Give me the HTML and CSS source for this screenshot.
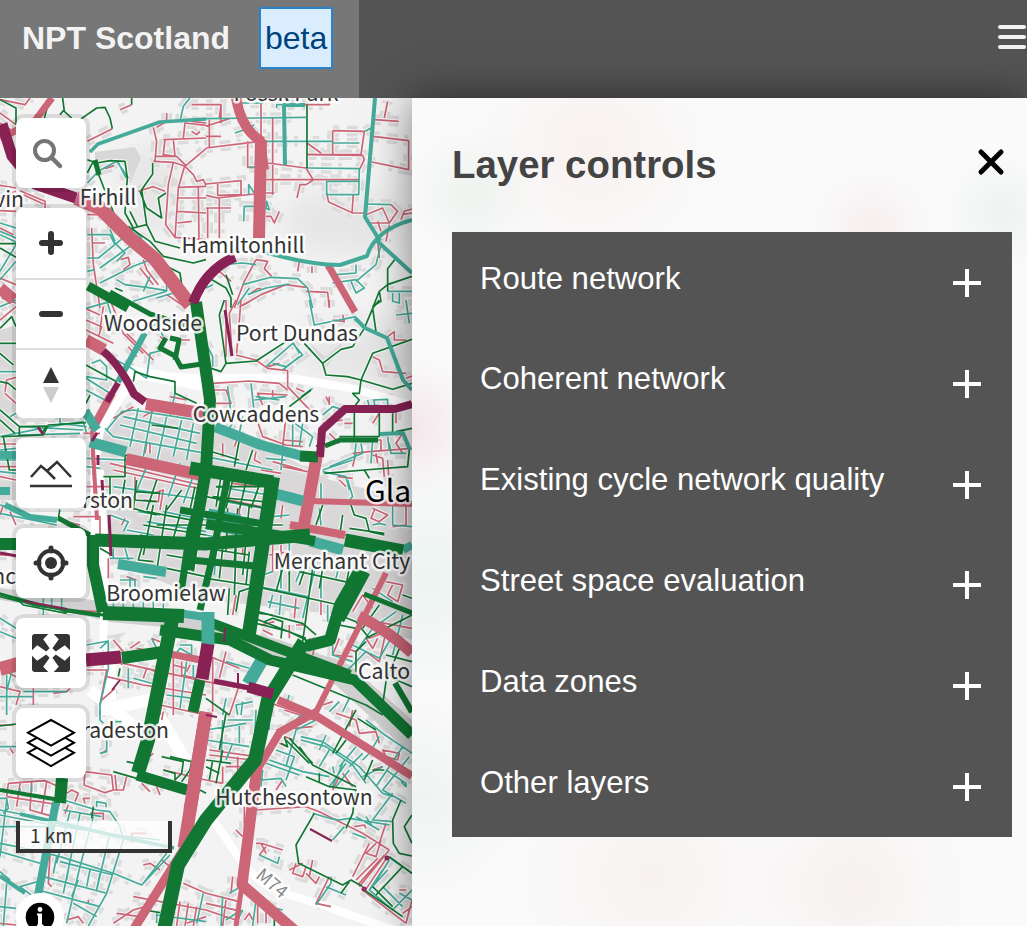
FILE: index.html
```html
<!DOCTYPE html>
<html lang="en">
<head>
<meta charset="utf-8">
<title>NPT Scotland</title>
<link rel="stylesheet" href="styles.css">
</head>
<body>
<header class="header">
  <div class="brand"><strong>NPT Scotland</strong><span class="beta">beta</span></div>
  <svg class="menu" width="28" height="26" viewBox="0 0 28 26"><path d="M1 3H25M1 13H25M1 23H25"/></svg>
</header>
<main class="main">
<section class="map">
<svg class="canvas" width="412" height="828" viewBox="0 98 412 828">
<defs>
<g id="streets">
  <g transform="translate(0 98) scale(.3333)">
    <path class="p" d="M0 5L75 20L90 0M360 35L395 20M262 130L337 92M0 45L48 80M0 75L48 105M460 88L470 130L465 190M460 190L520 193L555 205L618 152M490 125L618 120M495 125L490 170L525 175L520 125M465 175L530 175L555 200L535 270L525 420M520 193L505 260L497 380L525 418L618 425M535 268L618 265M532 300H618M532 340L618 345M532 375L575 370M555 205L580 230L590 250L610 245L618 262M415 280L460 266L495 280M315 212L342 203M595 265L597 420M550 120L555 75L618 82M500 45V70L470 88M575 20H618M575 100L590 110L600 100M0 262L48 270M0 300L48 280M70 290L130 318M60 278L135 310V330M0 338L48 340M262 350H330M275 390L280 500L300 630M275 435H315M430 485L440 515L475 560M420 510L460 560M362 485L385 478L390 500L370 515M300 345L350 400M0 540L48 560M0 390L40 410M5 600L48 615M500 590L560 630M575 70L618 75"/>
    <path class="t" d="M540 70L550 25L570 0M262 255L295 220L350 190L385 240M352 188L378 240M0 375L48 390M0 400L48 420M0 410L48 432M0 520L48 440M0 545L48 490M262 480H295L400 395L425 420L300 510M340 430L375 465L350 490M262 520L285 515M300 555L400 505L440 490L470 470M350 545L375 560L440 568L500 578V545M262 410H330L345 440M395 415L440 470M430 580L450 535M400 610L500 580M470 600L520 585M330 395L345 430"/>
    <path class="g" d="M0 5L48 30V80M150 0L133 60M188 0L193 40L215 60M193 35L180 50M240 65L290 30L315 28L330 60L337 92M395 0V20M262 185L290 195L330 188L375 190L382 240L375 345L400 390L440 380L425 275L458 228V195M262 225L280 190L300 240L345 355M440 380L465 430L540 450M440 330L485 360L475 300L498 285M440 330L420 280M385 385L450 430L490 475L580 495L618 485M345 570L368 580M390 340L412 385M0 437H48M0 450L48 478M500 505L540 525L545 560"/>
  </g>
  <g transform="translate(206 98) scale(.3333)">
    <path class="p" d="M0 20H45L40 60M45 20V75M0 85L70 62M10 65V150M0 150L165 130M165 0V140M0 115H45M245 20H370V5M380 98L475 100L465 170H305M380 98V170M303 135L345 165M303 170L470 172L475 185L462 212M505 65L578 70M535 60L545 10M500 115L608 128V215L498 192M125 130V208H145M185 195L300 210L322 246L300 260H282L273 300M180 245H460M200 60V290M180 285H205M0 258L105 248V290L35 292V255M0 292L35 300L145 288M0 330H75M40 300V420M5 330V420M180 355H195L205 375L220 340M362 285L368 312L440 345H475M442 290L438 345M480 350L530 330L550 375L490 375M550 375L575 340L555 320M585 365L595 340L618 333M588 350L618 345M550 380L540 430M515 370L525 400M150 485L115 550L85 630M150 485L185 490L175 512L197 535M280 490L275 520M135 585L155 572H165M300 580L365 583L370 630M110 622L165 590L240 560L300 568M318 505V525M515 430L520 480M0 560L40 520L75 550"/>
    <path class="t" d="M0 62L300 58M90 15H170V0M87 105L130 90L145 80M170 130H380M380 135H460M302 210L460 212L458 290H362V250H460M478 100L495 90M482 318L555 320M180 330L182 310L190 335L175 330M113 370L115 325H145M130 208H165M128 290V260L145 285M50 500L110 495L150 500M110 560L195 538L275 542L305 570L320 630M130 570L95 620M125 590L180 570L250 558M380 555L450 545L475 570L450 585L435 550M450 500V525L390 530M525 440L510 500L450 550M545 580H618M560 585V610L580 615V585M0 570L20 560M212 30V20H230"/>
    <path class="g" d="M303 20V210M570 480L545 512V580M618 535L545 560L520 580L500 630M0 535L60 570L75 600V630M545 560L555 555M60 530L80 590M520 580L525 610L500 625"/>
  </g>
  <g transform="translate(0 300) scale(.3333)">
    <path class="p" d="M255 25L300 45M258 60L305 80L295 110M258 90L340 130M330 0L355 60L370 100L430 160M310 20L300 90M380 100L460 180M385 140L410 170M540 120H570M480 110L500 125M15 275L20 240L48 232M15 280L48 310M0 60L48 20M340 510L618 570M330 490L600 555M400 320L340 355M450 430V460M440 430L435 460M405 530V600M480 570L475 605L430 600M250 400H300M275 450L285 600M0 432H48M0 500H48M0 530L48 540M510 290L560 300M260 560H330M430 350L480 320M460 580L490 570L480 630"/>
    <path class="t" d="M320 0L350 100M0 20L48 0M258 235L330 280M258 270L325 305M258 230L320 240V200L300 180L275 190M330 170L395 205L440 235M440 235L450 160L490 150M320 390L365 335L400 330L618 365M315 385L340 410L618 460M370 350L600 400M360 375L590 430M415 325L390 440M455 340L430 470M500 350L470 490M545 360L520 470M580 370L560 480M525 280L510 350M0 410L150 380L250 365L260 400M60 380L250 390M180 340V370L260 380M60 405L240 400M0 450L48 445M0 480H48M0 515L48 520M260 475L375 480L600 530M0 215H48M30 350L48 340M258 25L330 5M260 500L300 505M340 560L618 600M390 620L440 500M505 590L540 490M550 610L590 500M600 530L590 630M440 90L470 70L490 110"/>
    <path class="g" d="M0 85L35 50L48 80M0 160L40 195M0 130H48M0 245L25 250L48 270M0 330L58 380V410M0 360L45 400M5 410L130 405L145 375L258 368M10 410L28 510H60M58 380L140 378L125 400M258 195L350 245M258 310L270 285M400 245L405 215L450 230L525 245V280L590 310M375 465L618 530M310 530H375V465M375 540L360 630M410 540L400 630M330 530V590M405 575L480 580M400 600L470 605M455 375L535 385M545 570L500 630M470 540L440 630M585 560L570 630"/>
  </g>
  <g transform="translate(206 300) scale(.3333)">
    <path class="p" d="M60 0V170M90 0L70 40L78 160M105 0L92 160M370 0V20M410 45L415 65L380 60M90 165L150 180L185 205L245 212V260L330 350M20 250L130 243L220 250L245 270M170 315L155 280L245 285M20 270H60L75 310H30M200 270V290M270 265L295 275M370 290V315M500 170L520 180L530 215L600 220M545 110L565 95V120H600M415 370H440M370 400L400 430M500 370L520 340M600 235L618 228M440 460L490 455L618 445M465 420H525V450M450 460L440 500M500 465L530 475L535 530M400 540L420 560M395 530L440 535M200 485L290 510M230 500L330 520M150 455L145 480L165 490M50 430V470M100 400L85 440M240 350L230 440M150 350L170 410L240 435L290 440M100 20L130 5M185 200L220 190M370 310L360 290M20 590L165 620M80 550L150 560M545 480L550 560M510 460L515 490M570 340V370M590 400L570 430L590 460M350 370L410 360M230 420L290 425M165 510L225 520"/>
    <path class="t" d="M310 0L325 75L450 50M570 45L618 40M600 0L610 70M0 130L20 170V200M65 260L75 340M135 250L145 340M145 300L240 290M180 200L260 130L290 165L240 200L200 190M230 210L280 170M260 125L280 160M285 290L320 265M350 345L380 320L430 335M240 350L320 410L310 440M500 300L545 298V320L505 315V298M370 500L470 460L465 430M350 510L440 480M345 550V600M425 540L440 590L430 600M350 515L420 530L430 570M550 430L555 460H600M230 460L225 510M180 475L240 480M0 470L200 510M30 560L220 590M30 600L200 630M80 370L60 400M110 350L100 400M260 370V440M290 370L280 440M485 300L490 320M450 430L445 480M500 420L495 490M545 410L550 450M150 290L220 300"/>
    <path class="g" d="M55 0L40 45L60 190L150 183L240 125M0 200L45 215L60 190M295 130L350 190L360 225L425 230L465 240L560 268L618 250M465 240L500 160L618 118M350 190L405 148L440 140L475 85L500 25L520 0M500 25L510 95M465 240L460 280H440L460 300L445 320V415M520 340V410M560 340V400M355 520L475 510L605 500L610 450M475 510L490 535M250 320L315 270M100 420L85 500M0 450L100 480M140 450L120 510M50 500L30 620M80 540L60 625M120 545L100 630M160 555L135 625M0 590L180 625M30 560H180M20 590L170 605M400 410H520M330 440L350 420M570 395L618 385"/>
  </g>
  <g transform="translate(0 505) scale(.3333)">
    <path class="p" d="M0 30L10 0M220 35H300V90M200 50L240 60M365 60L375 40M325 160V220M0 150H48M390 430L420 410M340 405L370 440L365 480M260 495H320L300 600M370 475L618 530M320 515L430 540L618 570M430 520L440 490L480 505M520 440V630M490 550L480 630M520 480L560 490M480 600L618 630M300 590L345 550M455 400L480 410M200 315L300 320M0 490L48 515M0 545L60 560L48 600M160 565L200 560L210 550M100 550V600M380 215L410 225M545 470V510L590 520M570 480L560 500M410 430L460 440M30 20L48 60"/>
    <path class="t" d="M0 0L48 10M0 25L170 60M330 30L385 50L370 80M340 160V130M385 165L375 130M330 160H400M360 225H405V260M0 340L48 370M0 380L48 400M0 575H100M20 510V630M35 500L20 560M540 420H575V450L540 430L525 450M560 470L540 610M500 570L580 580M455 400L470 430M455 535L400 520M260 420L325 408L300 430M325 410V490L300 600V630M130 330V280M155 280V310M185 280V310M70 560H200M385 490V550M580 480V520M380 75L460 90M440 50L618 80M490 20L618 45M340 280V310M370 285V310M400 285V310M430 285V310M460 285V310M490 285V310M430 215L470 220M390 215V260M415 180L490 190M415 20L480 30"/>
    <path class="g" d="M0 265L75 285L200 320L300 335M0 275L60 290L70 300L200 325M180 10L175 40M120 200V190M430 60L618 90M440 20L600 50M460 0L430 150M500 0L470 200M610 0L580 200M420 90L500 110M360 490L355 515M500 150L618 170M500 190L618 215M430 110L415 165L460 170M540 30L520 100M300 130L335 150M470 60H618M400 10L470 30"/>
  </g>
  <g transform="translate(206 505) scale(.3333)">
    <path class="p" d="M230 0L225 40M250 60L430 92M500 10L545 30L520 50L495 40L505 15M600 0V60L560 65M540 230L590 240L575 290L545 270L560 240M510 350L618 370M440 320L470 270L500 310M480 400L500 430L515 400M400 400L380 450L440 455M270 280L265 340M345 290V330M440 390L420 450M0 450L100 490M0 530L210 570M20 460V620M100 540L70 630M60 440L40 520M200 120V200M225 120V160M190 150L250 140M165 360L205 350M170 375L200 390M180 590L300 630M310 400L325 430L320 450M270 360H300M250 360V400M90 270L80 330M100 10V80M0 40L130 60M60 90L100 100M110 130V150M350 600L380 590M420 430L450 440M490 400L540 380L520 470L480 440"/>
    <path class="t" d="M340 10L345 60M400 180L390 220M560 0V60L618 65M500 60L520 55L540 60M570 320L500 370L450 440M500 250L560 290M160 245L305 275L290 340M185 290L280 310M200 200L170 210V240M225 160V250M290 180L270 230M330 180L310 260M250 100V210M345 220V280M365 300V350M440 420L520 460L555 400M380 420V450L440 470M60 470L130 490M250 570L240 600M410 620L430 580M370 620L400 590M60 580L50 630M110 590L105 630M140 590L90 600L95 630M0 90L150 120M0 70L120 95M225 270L220 330M250 30L200 35M155 280L165 250M420 500L480 440M590 330L560 450M0 20L130 40M30 130L25 210M200 270L190 310"/>
    <path class="g" d="M330 60L350 0M435 0L445 30L480 40L490 80L535 90M430 70L535 85M410 30L400 100M150 245L400 300M155 320L290 355L330 390M145 340L300 400M130 350L250 380L330 420M175 350L200 340L230 350L225 400M120 320L200 330M320 190L290 410M350 190L340 250M300 180L280 240M250 190V260M280 200L440 235M230 190L210 260M430 190L410 290M400 330L450 350L490 400M480 410L450 440V500M580 430L540 530L530 600M560 520L618 545M520 300L470 370M260 510L480 600L530 630M540 450L618 470M0 580L70 630M0 220L130 240M0 130L130 150M65 10L60 140M95 10L85 170M130 0L110 210M0 60H230M90 130L85 270M50 130L40 220M130 140L120 240M130 250L100 260L90 320M70 250L65 330M480 400L618 330M400 360L450 370M590 270L618 280"/>
  </g>
  <g transform="translate(0 710) scale(.3333)">
    <path class="p" d="M25 220L135 212L200 240M25 220L20 260M60 220L50 290M95 215L90 300L160 320M140 215L125 310M20 260L180 285M255 185L335 195L340 240L315 248L252 225ZM340 240L370 240L380 200M345 195L350 240M200 250L215 240L235 250L225 275M270 265L250 265L255 280M270 310H310V330M395 400V370H440M425 220L450 245M470 230L480 255M435 150L460 130M490 180L618 210M430 465L450 460L480 480M550 520L618 550M400 560L618 600M435 590L400 600L340 640M540 575L530 648M565 580L555 648M590 590L580 648M500 575L490 630M150 435L145 520L155 530M200 630L235 620L250 640M0 45H40M305 130L320 120M490 5L485 30M30 115L40 130M205 285L195 310M580 420L570 440M350 610L420 620M265 580V570M485 450L510 470M560 640L618 620M0 640L48 645"/>
    <path class="t" d="M0 265H20L25 295L10 310M0 315L155 345L320 370L515 410M0 300L150 330M190 270L290 300L330 305L360 350L370 390L320 550L265 648M290 290V275L318 280V292M0 400L100 420L180 440L340 490L425 525L510 435M430 520L500 430M0 350H150M20 270L0 440M280 320L240 470L200 640M240 310L190 550M210 305L170 460M330 370L290 540M190 300L305 320M0 485L30 510M115 540L300 590M130 500L320 550M180 455L340 495M170 440L160 490M210 450L200 510M270 480L260 530M300 490L290 540M235 510L215 560M220 580L290 620M0 590L48 595M20 520L10 648M320 90V125L300 130M300 0V30L310 40M0 110H48M0 425L120 460M350 375L480 390M470 610V640M470 615L618 635M610 550L590 640M100 560L60 530L130 510M60 235V250M95 225V245M345 35H365"/>
    <path class="g" d="M510 140L575 155L570 180L545 215M485 140L550 155L545 190L525 210V190L490 180M380 155L405 160M340 185L410 205M435 600L480 608M0 48L48 42M280 290L275 325M600 240L618 250"/>
  </g>
  <g transform="translate(206 710) scale(.3333)">
    <path class="p" d="M235 0L330 30M210 60L320 50M390 10L450 30L460 70L510 65L520 100M430 50L440 0M530 120L580 130L575 150L540 140ZM235 80L265 90M220 100L245 110M10 120L150 140M10 135L140 150M50 170V220M95 140V200M60 170H110M0 210L50 220M230 210L210 240M115 290V380M150 400H165L180 430M165 400L230 420M180 410L160 435M90 360L110 380M270 460L260 490L290 500L300 470M320 450L310 500M300 490L330 520L340 500M370 500L330 580L375 590M150 300L300 290L340 305L470 370L550 420M490 400L440 500M510 400L480 430L510 440L525 390M550 420L460 530M545 440L475 545M535 435L455 525M515 445L450 510M540 340L520 400M445 350L475 345L480 355M470 540L600 640M580 540H600M600 640L618 570M0 550L100 575M0 580L110 605M0 600L90 630M115 630L130 610L140 630M60 570L50 648M80 500L75 550M180 570V640M155 565V640M500 180L530 170M400 200L380 240M410 190L440 230M250 480L290 460M590 610L618 590"/>
    <path class="t" d="M50 30L45 160M0 90L130 110M65 30H140M80 100L60 150M100 40V100M0 60L120 40M150 0L145 100M190 0V60M300 0L250 50M330 30L270 60L240 170M285 80L350 95L460 170L530 250L560 260M285 90L360 110L440 165L480 220M190 150L290 185L370 200M180 160L280 195M210 120L265 140L240 210M165 210L225 205L240 230M170 180L165 230M360 75L340 120M340 170L370 120M420 160L370 230M430 180L390 230M410 160L380 230M380 170L385 190M480 30L530 70L618 130M470 130L430 170M520 80L490 130M590 110L510 230M610 140L530 240M540 180L600 220V230L585 215M560 250L500 330L560 335M530 240L600 280M320 310L370 325L400 330L430 325L550 345M415 350L380 390M450 320L520 360M480 320L500 350M440 370L480 385M160 435L215 460L220 440M375 500V520L330 585M360 530L420 555M545 440L618 490M530 480L490 540L560 600L618 540M490 540L545 480M550 450L500 530M530 530L590 590M580 550L618 570M50 560L45 648M70 550L105 530M90 640L110 600M150 570L140 648M190 590L230 600M105 600L60 630M450 110L400 170M500 120L470 150M530 170L470 200"/>
    <path class="g" d="M240 90L310 160M250 85L320 160M235 80L245 110L225 100M280 110L320 165L450 230M300 200L370 230L450 240L440 310L420 355M380 130L450 0M340 190V220M390 130L420 90M475 210L500 150M325 310L270 405L278 460L410 525L435 510L470 530M405 550L430 515M475 540L590 620M500 530L560 590M510 555L590 470M550 440L618 490M585 270L560 330L562 400L580 430L618 438M618 315L595 350L618 400M0 150L75 160M0 170L40 190M20 150L10 210M60 10L40 120M205 610V648M50 120L30 220M455 25L510 60M500 180L535 180"/>
  </g>
</g>
</defs>

<rect y="98" width="412" height="828" fill="#f3f3f3"/>
<g class="relief"><ellipse cx="345" cy="222" rx="62" ry="32"/><ellipse cx="365" cy="352" rx="62" ry="32"/><ellipse cx="150" cy="190" rx="28" ry="45"/></g>
<path class="block" d="M95 420L205 415L330 480L412 500V640L340 615L210 600L105 560Z"/>
<path class="block" d="M95 152L135 147L141 158L130 184L125 165L95 162ZM310 343L325 357L345 340L325 370ZM0 330L16 325V500H0Z"/>
<use class="buildings" href="#streets"/>
<use class="casing" href="#streets"/>
<path class="water" d="M0 600L60 610L110 622L175 628L260 655L330 680L412 755V720L350 665L280 640L170 610L0 588Z"/>
<g class="motorway">
  <path d="M95 540V470L100 430L135 375L205 378L290 378L350 388L412 405M100 470L105 560L103 650M206 812C240 850 240 880 290 895S360 920 412 935"/>
  <path class="wide" d="M100 710L150 700L185 760M90 690L150 740M110 650V700M120 370L205 385"/>
</g>
<use class="thin" href="#streets"/>

<g class="p wide">
  <path d="M52 98L34 122L0 138" stroke-width="7"/>
  <path d="M76 198L100 208L130 238L155 259L190 305" stroke-width="14"/>
  <path d="M236 98Q242 130 260 140L264 170" stroke-width="10"/>
  <path d="M261 140L259 238" stroke-width="12"/>
  <path d="M0 288L14 300M86 340L104 350" stroke-width="12"/>
  <path d="M146 404L206 414M126 459L201 475" stroke-width="12"/>
  <path d="M92 430L112 393" stroke-width="8"/>
  <path d="M328 265L355 312" stroke-width="7"/>
  <path d="M317 455L304 525" stroke-width="12"/>
  <path d="M310 501L412 504" stroke-width="6"/>
  <path d="M290 525L345 535" stroke-width="8"/>
  <path d="M0 669L18 664" stroke-width="14"/>
  <path d="M386 573L312 720" stroke-width="6"/>
  <path d="M359 616Q390 632 412 653" stroke-width="11"/>
  <path d="M170 654L206 661" stroke-width="7"/>
  <path d="M206 712L184 848" stroke-width="13"/>
  <path d="M184 849L130 935" stroke-width="9"/>
  <path d="M258 760L242 885L300 935" stroke-width="11"/>
  <path d="M257 770L280 732L318 711" stroke-width="8"/>
  <path d="M278 700L318 717L412 776" stroke-width="8"/>
  <path d="M242 885L236 926" stroke-width="5"/>
  <path d="M99 415L92 432L97 520" stroke-width="4"/>
</g>
<g class="t wide">
  <path d="M90 152L98 144L160 122L206 119" stroke-width="3.5"/>
  <path d="M375 98L365 217L380 241M285 165L284 105H305" stroke-width="4"/>
  <path d="M264 252C300 262 320 265 340 265L367 256Q375 230 412 220M376 240L412 273" stroke-width="4"/>
  <path d="M355 318L365 328L387 338L403 380L412 390" stroke-width="4"/>
  <path d="M145 333L118 382" stroke-width="6"/>
  <path d="M85 411L97 430" stroke-width="9"/><path d="M90 442L126 452" stroke-width="11"/>
  <path d="M215 427L261 445L302 456" stroke-width="10"/>
  <path d="M380 434L403 433L410 450" stroke-width="4"/>
  <path d="M118 564L166 572" stroke-width="10"/><path d="M208 514L240 520M310 541L343 550M276 494L303 501" stroke-width="11"/>
  <path d="M178 613L205 617" stroke-width="8"/>
  <path d="M262 660L248 684" stroke-width="13"/>
  <path d="M5 505L30 517L57 520" stroke-width="6"/>
  <path d="M56 802L38 895" stroke-width="8"/><path d="M0 876L25 893" stroke-width="4"/>
  <path d="M20 814L130 839L174 848" stroke-width="3.5"/>
  <path d="M0 455H17M0 491H10M403 550L412 545" stroke-width="8"/>
</g>
<g class="g wide">
  <path d="M88 286L128 308" stroke-width="9"/><path d="M110 292L150 314L185 325" stroke-width="5"/>
  <path d="M166 338L160 348L175 356L181 367L202 364" stroke-width="5"/>
  <path d="M170 338L179 340L175 360" stroke-width="5"/>
  <path d="M196 302L210 400L206 470L188 570" stroke-width="12"/>
  <path d="M190 468L273 482" stroke-width="13"/>
  <path d="M273 477L248 640" stroke-width="14"/>
  <path d="M206 480L190 530L180 600M228 475L213 555L200 610" stroke-width="7"/>
  <path d="M95 540L206 544L310 535" stroke-width="13"/>
  <path d="M206 524L315 541" stroke-width="10"/>
  <path d="M180 510L270 525M190 560L255 566" stroke-width="7"/>
  <path d="M345 540L403 551" stroke-width="13"/>
  <path d="M0 544H17M93 535V565L103 612" stroke-width="12"/>
  <path d="M103 613L184 616" stroke-width="14"/>
  <path d="M160 630L230 640L270 660L355 680L412 735" stroke-width="11"/>
  <path d="M206 621L270 645L350 675" stroke-width="10"/>
  <path d="M173 615L148 740L138 773" stroke-width="14"/>
  <path d="M122 658L170 651" stroke-width="12"/>
  <path d="M304 642L268 700L255 760L206 820L178 865L164 930" stroke-width="14"/>
  <path d="M306 646L330 640L340 605L360 570" stroke-width="12"/>
  <path d="M366 572L340 620" stroke-width="9"/><path d="M364 594L412 613" stroke-width="5"/>
  <path d="M200 680L193 712" stroke-width="11"/>
  <path d="M137 775L187 790" stroke-width="11"/>
  <path d="M62 778L60 803" stroke-width="12"/><path d="M0 790L60 800" stroke-width="4"/>
  <path d="M300 456L318 457" stroke-width="11"/>
  <path d="M325 446L340 440H378" stroke-width="5"/>
  <path d="M95 160L99 175M58 518L90 535" stroke-width="5"/>
  <path d="M0 594L35 605L103 615" stroke-width="3"/>
  <path d="M395 683L412 712" stroke-width="6"/>
</g>
<path class="t" d="M208 612V645" stroke-width="13"/>
<path class="p" d="M206 712L190 810" stroke-width="13"/>
<g class="m wide">
  <path d="M2 124L12 156L35 184L76 198" stroke-width="11"/>
  <path d="M193 303Q205 270 235 257" stroke-width="10"/>
  <path d="M103 351Q120 365 134 394L145 402" stroke-width="8"/>
  <path d="M118 383L107 402" stroke-width="6"/>
  <path d="M97 433L92 441M98 455V465M102 480L103 495M109 515L111 556" stroke-width="3"/>
  <path d="M225 310L232 356" stroke-width="3"/>
  <path d="M320 457L322 430L345 409H395L412 404" stroke-width="8"/>
  <path d="M86 660L121 657" stroke-width="13"/>
  <path d="M208 644L202 679" stroke-width="13"/>
  <path d="M214 681L250 688" stroke-width="5"/><path d="M248 687L273 694" stroke-width="11"/>
  <path d="M24 601L67 609M310 829L332 841M225 628L224 642M112 690L120 680M206 715L217 717M238 673V687" stroke-width="2"/>
  <path d="M0 553L17 556M38 427L43 434" stroke-width="3"/>
  <circle cx="387" cy="858" r="1.5" stroke-width="2"/><circle cx="364" cy="889" r="1.5" stroke-width="2"/>
</g>
<g class="labels">
  <text x="286" y="101">Fossil Park</text>
  <text x="108" y="205">Firhill</text>
  <text x="24" y="207" text-anchor="end">Kelvin</text>
  <text x="243" y="253">Hamiltonhill</text>
  <text x="153" y="331">Woodside</text>
  <text x="297" y="341">Port Dundas</text>
  <text x="256" y="422">Cowcaddens</text>
  <text x="133" y="508" text-anchor="end">Anderston</text>
  <text x="342" y="569">Merchant City</text>
  <text x="166" y="601">Broomielaw</text>
  <text x="16" y="584" text-anchor="end">nc</text>
  <text x="358" y="679" text-anchor="start">Calto</text>
  <text x="169" y="738" text-anchor="end">Tradeston</text>
  <text x="294" y="805">Hutchesontown</text>
  <text class="city" x="365" y="502" text-anchor="start">Gla</text>
  <text class="road" transform="translate(268 888) rotate(40)">M74</text>
</g>
</svg>

<div class="controls">
  <button class="ctl"><svg width="70" height="70"><circle cx="28.5" cy="32.5" r="9.5" fill="none" stroke="#757575" stroke-width="4"/><path d="M35.5 39.5L44 48" stroke="#757575" stroke-width="4.5" stroke-linecap="round"/></svg></button>
  <div class="stack">
    <button><svg width="70" height="70"><path class="bold" d="M26 35H44M35 26V44"/></svg></button>
    <button><svg width="70" height="70"><path class="bold" d="M26 34H44"/></svg></button>
    <button><svg width="70" height="70"><path d="M27 33L35 17L43 33Z" fill="#333"/><path d="M27 37H43L35 53Z" fill="#ccc"/></svg></button>
  </div>
  <button class="ctl"><svg width="70" height="70"><path d="M15 39L25 28L31 33L41 24L55 39M31 33L39 41M14 48H56" fill="none" stroke="#333" stroke-width="2.5"/></svg></button>
  <button class="ctl"><svg width="70" height="70"><circle cx="35" cy="35" r="12.2" fill="none" stroke="#333" stroke-width="4"/><circle cx="35" cy="35" r="6" fill="#333"/><path d="M35 20V23M35 47V50M20 35H23M47 35H50" stroke="#333" stroke-width="5" stroke-linecap="round"/></svg></button>
  <button class="ctl"><svg width="70" height="70"><g id="arrows"><path id="arrow" d="M19 16H32.3L27.2 21.2L33.6 30.2L30.2 33.6L21.2 27.2L16 32.3V19Q16 16 19 16Z" fill="#333"/><use href="#arrow" transform="matrix(-1 0 0 1 70 0)"/></g><use href="#arrows" transform="matrix(1 0 0 -1 0 70)"/></svg></button>
  <button class="ctl"><svg width="70" height="70" fill="#fff" stroke="#000" stroke-width="2"><path d="M12 44.7L35 32L58 44.7L35 58Z"/><path d="M12 34.7L35 22L58 34.7L35 47.5Z"/><path d="M12 24.7L35 12L58 24.7L35 37.5Z"/></svg></button>
</div>
<div class="scale">1 km</div>
<svg class="info" width="48" height="48"><circle cx="24" cy="24" r="24" fill="#fff"/><circle cx="24" cy="24" r="14.3"/><circle cx="24" cy="16.5" r="2.4" fill="#fff"/><path d="M21 20.5H26V31.5H27.5V33.5H21V31.5H22V22.5H21Z" fill="#fff"/></svg>
</section>
<aside class="panel">
  <div class="panel-head"><h1>Layer controls</h1><svg width="28" height="28" viewBox="0 0 28 28"><path d="M4 4L24 24M24 4L4 24"/></svg></div>
  <ul class="layers">
    <li>Route network<i></i></li>
    <li>Coherent network<i></i></li>
    <li>Existing cycle network quality<i></i></li>
    <li>Street space evaluation<i></i></li>
    <li>Data zones<i></i></li>
    <li>Other layers<i></i></li>
  </ul>
</aside>
</main>
</body>
</html>
```
FILE: styles.css
```css
* { box-sizing: border-box; }
body { margin: 0; width: 1027px; height: 926px; overflow: hidden; display: flex; flex-direction: column; font-family: "Liberation Sans", Arial, sans-serif; }
.header { height: 98px; flex: none; background: #545454; display: flex; justify-content: space-between; }
.brand { width: 359px; background: #777; color: #f3f3f3; font-size: 32px; padding: 7px 0 0 22px; display: flex; align-items: flex-start; gap: 29px; line-height: 62px; }
.beta { height: 62px; line-height: 58px; padding: 0 4px; border: 2px solid #2b83cc; background: #d9edff; color: #00437b; }
.menu { margin-top: 24px; overflow: visible; }
.menu path { stroke: #f3f3f3; stroke-width: 4; stroke-linecap: round; }
.main { flex: 1; display: flex; min-height: 0; }
.map { width: 412px; flex: none; position: relative; overflow: hidden; }
.canvas { display: block; }
.canvas path { fill: none; }
.canvas { --pink: #cc6677; --teal: #44aa99; --green: #117733; --maroon: #882255; }
.p { stroke: var(--pink); }
.t { stroke: var(--teal); }
.g { stroke: var(--green); }
.m { stroke: var(--maroon); fill: none; }
.buildings { --pink: #dcdbdb; --teal: #dddcdc; --green: transparent; stroke-width: 32; stroke-dasharray: 20 23 32 19 12 44; }
.casing { --pink: #f4f4f4; --teal: #f4f4f4; --green: #f4f4f4; stroke-width: 12; }
.thin { stroke-width: 5; stroke-linejoin: round; }
.wide { stroke-linejoin: round; }
.canvas .block { fill: #d9d7d8; }
.canvas .water { fill: #d0d0d0; }
.relief { fill: #e6e6e6; filter: blur(12px); }
.motorway { stroke: #fff; stroke-width: 8; }
.motorway .wide { stroke-width: 12; }
.labels { font-family: "Noto Sans CJK SC", "Noto Sans", sans-serif; font-size: 21.2px; fill: #333; stroke: rgba(255,255,255,.85); stroke-width: 5px; stroke-linejoin: round; paint-order: stroke; text-anchor: middle; }
.labels .city { font-size: 30px; fill: #000; }
.labels .road { font-size: 18px; fill: #888; }
.controls { position: absolute; left: 16px; top: 20px; display: flex; flex-direction: column; gap: 20px; }
.ctl, .stack { width: 70px; background: #fff; border: 0; border-radius: 8px; box-shadow: 0 0 0 4px rgba(0,0,0,.1); overflow: hidden; }
.ctl { height: 70px; padding: 0; }
.stack { height: 210px; }
.stack button { display: block; width: 70px; height: 70px; padding: 0; border: 0; background: #fff; }
.stack button + button { border-top: 2px solid #ddd; }
.controls svg { display: block; }
.bold { stroke: #333; stroke-width: 6; stroke-linecap: round; }
.scale { position: absolute; left: 16px; top: 723px; width: 156px; height: 32px; border: 4px solid #333; border-top: 0; background: rgba(255,255,255,.75); padding: 0 10px; font: 19px/27px "Noto Sans CJK SC", "Noto Sans", sans-serif; color: #333; }
.info { position: absolute; left: 16px; top: 795px; }
.panel { flex: 1; padding: 0 15px 0 40px; box-shadow: 0 0 40px rgba(0,0,0,.5); position: relative; background:
  radial-gradient(circle at 0 330px, #f3e6e9 0, transparent 70px),
  radial-gradient(circle at 15px 480px, #ecf4f2 0, transparent 120px),
  radial-gradient(circle at 60px 95px, #eef3ef 0, transparent 70px),
  radial-gradient(circle at 180px 50px, #f8f1f0 0, transparent 120px),
  radial-gradient(circle at 460px 130px, #f7eeef 0, transparent 60px),
  radial-gradient(circle at 590px 115px, #edf3f0 0, transparent 60px),
  radial-gradient(circle at 10px 700px, #eff4f1 0, transparent 110px),
  radial-gradient(circle at 240px 780px, #f8f2f2 0, transparent 140px),
  radial-gradient(circle at 440px 790px, #f7f1f1 0, transparent 120px), #fafafa; }
.panel-head { height: 134px; display: flex; justify-content: space-between; padding: 45px 7px 0 0; }
h1 { margin: 0; font-size: 38.4px; line-height: 44px; color: #444; }
.panel-head svg { margin-top: 5px; }
.panel-head path { stroke: #000; stroke-width: 5; stroke-linecap: round; }
.layers { margin: 0; padding: 0; list-style: none; height: 605px; background: #545454; color: #fff; font-size: 31.1px; display: grid; grid-template-rows: repeat(6, 1fr); }
.layers li { display: flex; justify-content: space-between; padding: 28.6px 31px 0 28px; line-height: 36px; }
.layers i { width: 28px; height: 28px; margin-top: 8.4px; background: linear-gradient(#fff,#fff) center/28px 4px no-repeat, linear-gradient(#fff,#fff) center/4px 28px no-repeat; }
```
